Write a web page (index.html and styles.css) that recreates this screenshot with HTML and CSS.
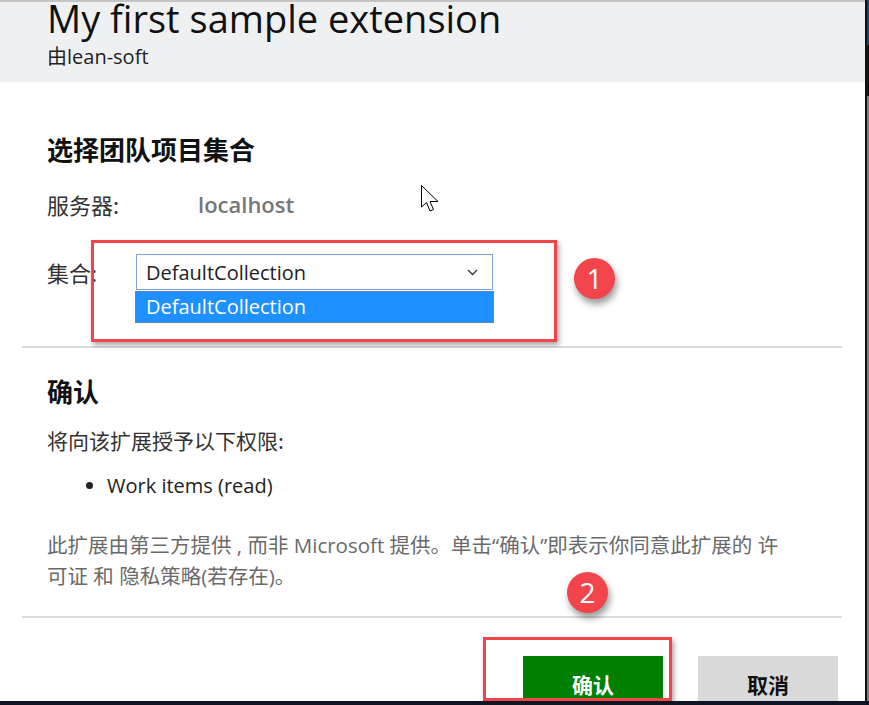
FILE: index.html
```html
<!DOCTYPE html>
<html lang="zh-CN">
<head>
<meta charset="utf-8">
<title>My first sample extension</title>
<link rel="stylesheet" href="styles.css">
</head>
<body>
<div class="screen">
  <div class="row">
    <div class="page">
      <header class="header">
        <h1 class="title">My first sample extension</h1>
        <div class="by">由lean-soft</div>
      </header>

      <section class="section first">
        <h2 class="heading">选择团队项目集合</h2>
        <div class="field server">
          <span class="label label-server">服务器:</span>
          <span class="host">localhost</span>
        </div>
        <div class="field coll">
          <span class="label label-coll">集合:</span>
          <div class="select-wrap">
            <div class="select">
              <span>DefaultCollection</span>
              <svg class="chev" width="11" height="7" viewBox="0 0 11 7"><polyline points="1,1 5.5,5.5 10,1" fill="none" stroke="#333" stroke-width="1.3"/></svg>
            </div>
            <div class="menu">DefaultCollection</div>
          </div>
        </div>
      </section>

      <hr class="divider first-div">

      <section class="section second">
        <h2 class="heading">确认</h2>
        <p class="grant">将向该扩展授予以下权限:</p>
        <ul class="perms">
          <li>Work items (read)</li>
        </ul>
        <p class="note">此扩展由第三方提供 , 而非 Microsoft 提供。单击“确认”即表示你同意此扩展的 许<br>可证 和 隐私策略(若存在)。</p>
      </section>

      <hr class="divider second-div">

      <div class="actions">
        <button class="btn ok">确认</button>
        <button class="btn cancel">取消</button>
      </div>

      <div class="anno-box box1"></div>
      <div class="badge badge1">1</div>
      <div class="anno-box box2"></div>
      <div class="badge badge2">2</div>

      <svg class="cursor" width="20" height="28" viewBox="0 0 20 28"><path d="M0.5 0.5 V22 L5.5 17.5 L9 26 L12.5 24.5 L9 16.5 H17 Z" fill="#fff" stroke="#000" stroke-width="1" stroke-linejoin="miter"/></svg>
    </div>
    <div class="edge"></div>
    <div class="scroll"></div>
  </div>
  <div class="bottombar"></div>
</div>
</body>
</html>
```

FILE: styles.css
```css
* { box-sizing: border-box; }
html, body { margin: 0; padding: 0; background: #fff; }
body {
  font-family: "Open Sans", "Noto Sans CJK SC", sans-serif;
  color: #222;
}
.screen {
  width: 869px;
  height: 705px;
  display: flex;
  flex-direction: column;
  overflow: hidden;
}
.row { flex: 1; display: flex; min-height: 0; }
.page {
  flex: 1;
  position: relative;
  border-top: 2px solid #c4c4c4;
  background: #fff;
  overflow: hidden;
}
.edge { width: 2px; background: #111; }
.scroll {
  width: 2px;
  background: linear-gradient(#0b4a78 0 45px, #141414 45px 96px, #7e7e7e 96px);
}
.bottombar { height: 4px; background: #0d1621; }

.header {
  height: 80px;
  background: #eff0f2;
  padding-left: 47px;
}
.title {
  margin: 0;
  font-weight: 400;
  font-size: 38px;
  line-height: 36px;
  color: #111;
  position: relative;
  top: -2px;
}
.by {
  font-size: 20px;
  line-height: 26px;
  margin-top: 6px;
  color: #222;
}

.section { padding-left: 47px; }
.section.first { padding-top: 52px; }
.heading {
  margin: 0;
  font-family: "Noto Sans CJK SC", sans-serif;
  font-size: 26px;
  font-weight: 700;
  line-height: 30px;
  color: #111;
}
.field { display: flex; align-items: center; }
.server { margin-top: 25px; height: 30px; }
.coll { margin-top: 35px; height: 36px; }
.label {
  font-family: "Noto Sans CJK SC", sans-serif;
  font-size: 22px;
  color: #333;
}
.label-server { width: 151px; }
.label-coll { width: 89px; }
.host {
  font-size: 22px;
  font-weight: 600;
  color: #777;
}
.select-wrap { position: relative; }
.select {
  width: 357px;
  height: 36px;
  border: 1px solid #7da2d8;
  display: flex;
  align-items: center;
  justify-content: space-between;
  padding: 0 14px 0 9px;
  font-size: 20px;
  color: #222;
  background: #fff;
}
.chev { margin-top: 1px; }
.menu {
  position: absolute;
  left: -1px;
  top: 37px;
  width: 359px;
  height: 32px;
  background: #1e90ff;
  border: 1px solid #5b86c4;
  color: #fff;
  font-size: 20px;
  line-height: 29px;
  padding-left: 10px;
}

.divider {
  border: 0;
  height: 2px;
  background: #dcdcdc;
  margin: 0 23px 0 22px;
}
.first-div { margin-top: 56px; }
.section.second { padding-top: 28px; }
.grant {
  margin: 20px 0 0;
  font-family: "Noto Sans CJK SC", sans-serif;
  font-size: 21px;
  line-height: 28px;
  color: #333;
}
.perms {
  margin: 18px 0 0;
  padding-left: 60px;
  font-size: 20px;
  line-height: 28px;
  color: #222;
}
.note {
  margin: 30px 0 0;
  font-family: "Open Sans", "Noto Sans CJK SC", sans-serif;
  font-size: 20.5px;
  line-height: 31px;
  color: #6a6a6a;
}
.second-div { margin-top: 24px; }

.actions {
  display: flex;
  justify-content: flex-end;
  gap: 35px;
  padding-right: 27px;
  margin-top: 38px;
}
.btn {
  width: 140px;
  height: 52px;
  border: 0;
  font-family: "Noto Sans CJK SC", sans-serif;
  font-size: 21px;
  font-weight: 700;
  padding: 4px 0 0;
}
.ok { background: #008000; color: #fff; }
.cancel { background: #d9d9d9; color: #111; }

.anno-box {
  position: absolute;
  border: 3px solid #f2454b;
  box-shadow: 2px 3px 5px rgba(0,0,0,0.35);
}
.box1 { left: 91px; top: 238px; width: 466px; height: 102px; }
.box2 { left: 483px; top: 635px; width: 189px; height: 64px; }
.badge {
  position: absolute;
  width: 41px;
  height: 41px;
  border-radius: 50%;
  background: #f2454b;
  color: #fff;
  font-family: "Open Sans", sans-serif;
  font-size: 28px;
  line-height: 41px;
  text-align: center;
  box-shadow: 2px 5px 7px rgba(0,0,0,0.4);
}
.badge1 { left: 574px; top: 256px; }
.badge2 { left: 567px; top: 570px; }
.cursor { position: absolute; left: 421px; top: 183px; }
```
